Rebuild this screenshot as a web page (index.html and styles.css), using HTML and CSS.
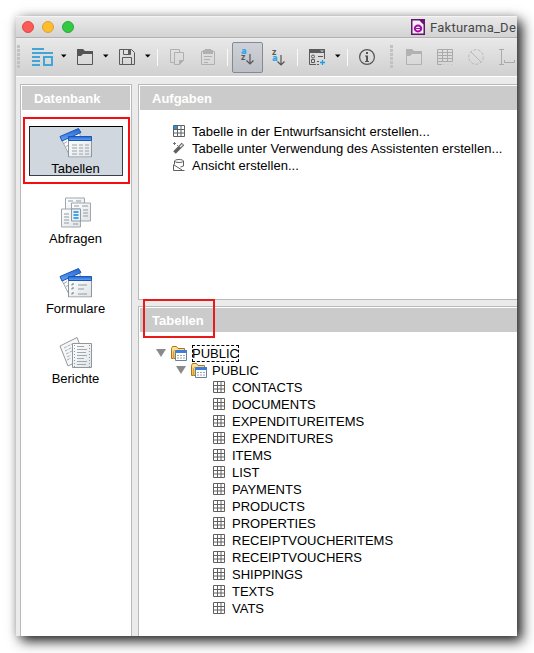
FILE: index.html
```
<!DOCTYPE html>
<html lang="de">
<head>
<meta charset="utf-8">
<title>Fakturama</title>
<link rel="stylesheet" href="styles.css">
</head>
<body>
<svg class="defs" width="0" height="0">
  <defs>
    <linearGradient id="gold" x2="0" y2="1"><stop stop-color="#ffe9a0"/><stop offset="1" stop-color="#eeb83c"/></linearGradient>
    <linearGradient id="blue" x2="0" y2="1"><stop stop-color="#2464d0"/><stop offset="1" stop-color="#65a5fa"/></linearGradient>
    <linearGradient id="paper" x2="1" y2="1"><stop stop-color="#fff"/><stop offset="1" stop-color="#dfe4e8"/></linearGradient>
  </defs>
  <symbol id="caret" viewBox="0 0 6 4"><path d="M0 .5h5.5L2.75 3.5z"/></symbol>
  <symbol id="folder" viewBox="0 0 16 17"><path d="M.5 2.500V15.500H15.500V4.500H7" fill="none" stroke="currentColor"/><path d="M0 0h6l2 2h8v3H6L4 7H0z" fill="currentColor"/></symbol>
  <symbol id="grid" viewBox="0 0 12 12"><path d="M.5.5h11v11H.5zM4.500 0v12M8 0v12M0 4.500h12M0 8h12" fill="none" stroke="#606060"/></symbol>
  <symbol id="dbfolder" viewBox="0 0 16 15">
    <path d="M.5 12.500V2.500l1-2h4l1.500 2h6.500v10z" fill="url(#gold)" stroke="#ad7411"/>
    <path d="M2.500 13V5.500l1-1h10" fill="none" stroke="#d79c38"/>
    <path d="M4.500 5.500h11v9h-11z" fill="#fff" stroke="#6a7f9b"/>
    <path d="M5 4h11v3H4V5z" fill="#3c7ede"/>
    <path d="M6 9.500h2m1 0h2m1 0h2M6 12h2m1 0h2m1 0h2" stroke="#9aa3ae"/>
  </symbol>
  <symbol id="window-pair" viewBox="0 0 34 30">
    <path d="M2 11 20 3l4 17-14 7z" fill="#f8fafb" stroke="#a2a8ad"/>
    <path d="M1 9 19.500 1l2.500 4L3 13.500z" fill="url(#blue)" stroke="#1957b5"/>
    <path d="M5 16l3-2m-1 5 2-1" stroke="#a2a8ad"/>
    <path d="M9.500 9.500h23v20h-23z" fill="url(#paper)" stroke="#8b959d"/>
    <path d="M9.500 9h23v4h-23z" fill="url(#blue)" stroke="#1957b5"/>
  </symbol>
</svg>

<main class="window">
  <header class="titlebar">
    <div class="lights"><i class="close"></i><i class="minimize"></i><i class="maximize"></i></div>
    <div class="title">
      <svg width="14" height="16" viewBox="0 0 14 16"><path d="M.75.75h8l4.500 4.500v10H.75z" fill="#f8edf8" stroke="#5f1768" stroke-width="1.500"/><path d="M8 0h6v6z" fill="#6c127a"/><ellipse cx="7" cy="9.500" rx="3.200" ry="3" fill="none" stroke="#a10ca5" stroke-width="2"/><path d="M5 9.500h5" stroke="#a10ca5"/></svg>
      <span>Fakturama_De</span>
    </div>
  </header>

  <nav class="toolbar">
    <i class="grip"></i>
    <svg width="21" height="18" viewBox="0 0 21 18"><path d="M0 1h12M0 5h21M0 9h8M0 13h8M0 17h8" stroke="#42a5d8" stroke-width="2"/><path d="M12 9h8v8h-8z" fill="none" stroke="#42a5d8" stroke-width="2"/></svg>
    <svg class="caret" width="6" height="4"><use href="#caret"/></svg>
    <svg class="dark" width="16" height="17"><use href="#folder"/></svg>
    <svg class="caret" width="6" height="4"><use href="#caret"/></svg>
    <svg width="16" height="17" viewBox="0 0 16 17" fill="none" stroke="#5b5b5b"><path d="M.5.500h12l3 3v12h-15zM4.500.500v5h7v-5M3.500 16V8.500h9V16"/><path d="M10 1v4" stroke-width="2"/></svg>
    <svg class="caret" width="6" height="4"><use href="#caret"/></svg>
    <i class="sep"></i>
    <svg width="15" height="17" viewBox="0 0 15 17" fill="none" stroke="#b0b0b0"><path d="M4 13.500H.5V.500h9V3M4.500 3.500h9v8l-4 4h-5z"/><path d="M9 16v-5h5z" fill="#b0b0b0" stroke="none"/></svg>
    <svg width="15" height="17" viewBox="0 0 15 17" fill="none" stroke="#b0b0b0"><path d="M1.500 2.500h13v13h-13zM4 7.500h8M4 10.500h6M4 13.500h4"/><path d="M3 1h2V0h6v1h2v4H3z" fill="#b0b0b0" stroke="none"/></svg>
    <i class="sep"></i>
    <div class="pressed"><div class="sort"><b>a</b><em>z</em><svg width="8" height="11" viewBox="0 0 8 11"><path d="M4 0v10M.5 6.500 4 10l3.500-3.500" fill="none" stroke="#555" stroke-width="1.200"/></svg></div></div>
    <div class="sort"><em>z</em><b>a</b><svg width="8" height="11" viewBox="0 0 8 11"><path d="M4 0v10M.5 6.500 4 10l3.500-3.500" fill="none" stroke="#555" stroke-width="1.200"/></svg></div>
    <i class="sep"></i>
    <svg width="17" height="17" viewBox="0 0 17 17" fill="none" stroke="#5b5b5b"><path d="M.5 3v12.500H7M15.500 3v7M9 7.500h5M8 12.500h2M8 15.500h2"/><path d="M0 0h16v4H0z" fill="#5b5b5b" stroke="none"/><path d="M11 1.500h4L13 3z" fill="#ddd" stroke="none"/><circle cx="4" cy="7.500" r="1.500"/><path d="M2.500 10.500h3v3h-3z"/><path d="M13.500 11v5M11 13.500h5" stroke="#1d9bea" stroke-width="1.300"/></svg>
    <svg class="caret" width="6" height="4"><use href="#caret"/></svg>
    <i class="sep"></i>
    <svg width="16" height="17" viewBox="0 0 16 17"><circle cx="8" cy="8" r="7.400" fill="none" stroke="#555" stroke-width="1.200"/><path d="M7 3h2v2H7zM6 6.500h3V12h1v1H6v-1h1V7.500H6z" fill="#555"/></svg>
    <i class="grip"></i>
    <svg class="pale" width="16" height="17"><use href="#folder"/></svg>
    <svg width="16" height="17" viewBox="0 0 16 17" fill="none" stroke="#aaa"><path d="M.5.500h15v12H.5zM0 3.500h16M0 6.500h16M0 9.500h16M5.500 1v12M10.500 1v12M.5 12v3.500H5"/><path d="M6 15.500h10" stroke-dasharray="2 2" stroke="#ccc"/></svg>
    <svg width="16" height="17" viewBox="0 0 16 17" fill="none" stroke="#b9b9b9"><circle cx="8" cy="8" r="7.300" stroke-dasharray="3 1.500"/><path d="m3 3 10 10"/></svg>
    <svg width="18" height="17" viewBox="0 0 18 17" fill="none" stroke="#aaa"><path d="M0 .5h5M2.500.500v15M0 15.500h5M5.500 11v2.500h10V11"/></svg>
  </nav>

  <div class="workspace">
    <aside class="panel database">
      <h2>Datenbank</h2>
      <div class="categories">
        <div class="category selected">
          <svg width="34" height="30" viewBox="0 0 34 30"><use href="#window-pair"/><path d="M13 17.500h5m2 0h4m2 0h4M13 20.500h5m2 0h4m2 0h4M13 23.500h5m2 0h4m2 0h4M13 26.500h5m2 0h4m2 0h4" stroke="#9aa1a7"/></svg>
          <span>Tabellen</span>
        </div>
        <div class="category">
          <svg width="34" height="30" viewBox="0 0 34 30"><path d="M6.500.500h19v17h-19z" fill="url(#paper)" stroke="#a0a6ab"/><path d="M9 3.500h5m3 0h5" stroke="#929ba2"/><path d="M12.500 5.500h19v18h-19z" fill="url(#paper)" stroke="#a0a6ab"/><path d="M15 8.500h5m3 0h6M24 12.500h5M24 15.500h5M24 18.500h5" stroke="#929ba2"/><path d="M2.500 11.500h19v18h-19z" fill="url(#paper)" stroke="#a0a6ab"/><path d="M12.500 11.500h9v12h-9z" fill="#e6f2fa" stroke="#929ba2"/><path d="M5 16.500h5M5 19.500h5M5 22.500h5M5 25.500h5M14 26.500h5" stroke="#929ba2"/><path d="M14.500 14.500h5m-5 3h5m-5 3h5" stroke="#1689d5" stroke-width="1.500"/></svg>
          <span>Abfragen</span>
        </div>
        <div class="category">
          <svg width="34" height="30" viewBox="0 0 34 30"><use href="#window-pair"/><path d="M19 17.500h9m-9 4h6m-6 5h9" stroke="#929ba2"/><path d="M13 18v-1.500h2m-2 5.500v-1.500h2m-2 6.500v-1.500h2" fill="none" stroke="#6f777e"/></svg>
          <span>Formulare</span>
        </div>
        <div class="category">
          <svg width="34" height="31" viewBox="0 0 34 31"><path d="M1 9 18 .5l8 20L9 29z" fill="#f5f7f8" stroke="#92999f"/><path d="m5 11 8-4m-7 7 8-4m-7 7 6-3m-5 6 4-2M8 23l4-2" stroke="#a7adb2" stroke-dasharray="3 1"/><path d="M13.500 6.500h19v24h-19z" fill="url(#paper)" stroke="#8f979d"/><path d="M15.500 8v22M30.500 8v22" stroke="#8f979d" stroke-dasharray="1 2"/><path d="M18 9.500h7m-7 3h10m-10 3h9m-9 3h10m-10 3h7m-7 3h10m-10 3h9" stroke="#a1a7ac"/></svg>
          <span>Berichte</span>
        </div>
      </div>
      <div class="marker marker-category"></div>
    </aside>

    <div class="content">
      <section class="panel tasks">
        <h2>Aufgaben</h2>
        <ul>
          <li><svg width="12" height="12"><use href="#grid"/><path d="M1 1h3v3H1z" fill="#1c99e0"/></svg>Tabelle in der Entwurfsansicht erstellen...</li>
          <li><svg width="12" height="12" viewBox="0 0 12 12"><path d="M1.500 10.500 10 2" stroke="#606060" stroke-width="3.500"/><path d="m7 5 2.500-2.500" stroke="#eee" stroke-width="1.400"/><path d="M1.500 0v3M0 1.500h3M4 3.500h1" stroke="#777"/></svg>Tabelle unter Verwendung des Assistenten erstellen...</li>
          <li><svg width="12" height="12" viewBox="0 0 12 12" fill="none" stroke="#606060"><ellipse cx="6" cy="2" rx="4.500" ry="1.500"/><path d="M1.500 2v3l-1 1v5.500h11M10.500 2v5L7.500 8M1 6l8 5"/></svg>Ansicht erstellen...</li>
        </ul>
      </section>
      <section class="panel tables">
        <h2>Tabellen</h2>
        <div class="tree">
          <div class="node root"><i class="open"></i><svg width="16" height="15"><use href="#dbfolder"/></svg><span class="focused">PUBLIC</span></div>
          <div class="node schema"><i class="open"></i><svg width="16" height="15"><use href="#dbfolder"/></svg><span>PUBLIC</span></div>
          <div class="node leaf"><svg width="12" height="12"><use href="#grid"/></svg><span>CONTACTS</span></div>
          <div class="node leaf"><svg width="12" height="12"><use href="#grid"/></svg><span>DOCUMENTS</span></div>
          <div class="node leaf"><svg width="12" height="12"><use href="#grid"/></svg><span>EXPENDITUREITEMS</span></div>
          <div class="node leaf"><svg width="12" height="12"><use href="#grid"/></svg><span>EXPENDITURES</span></div>
          <div class="node leaf"><svg width="12" height="12"><use href="#grid"/></svg><span>ITEMS</span></div>
          <div class="node leaf"><svg width="12" height="12"><use href="#grid"/></svg><span>LIST</span></div>
          <div class="node leaf"><svg width="12" height="12"><use href="#grid"/></svg><span>PAYMENTS</span></div>
          <div class="node leaf"><svg width="12" height="12"><use href="#grid"/></svg><span>PRODUCTS</span></div>
          <div class="node leaf"><svg width="12" height="12"><use href="#grid"/></svg><span>PROPERTIES</span></div>
          <div class="node leaf"><svg width="12" height="12"><use href="#grid"/></svg><span>RECEIPTVOUCHERITEMS</span></div>
          <div class="node leaf"><svg width="12" height="12"><use href="#grid"/></svg><span>RECEIPTVOUCHERS</span></div>
          <div class="node leaf"><svg width="12" height="12"><use href="#grid"/></svg><span>SHIPPINGS</span></div>
          <div class="node leaf"><svg width="12" height="12"><use href="#grid"/></svg><span>TEXTS</span></div>
          <div class="node leaf"><svg width="12" height="12"><use href="#grid"/></svg><span>VATS</span></div>
        </div>
        <div class="marker marker-tables"></div>
      </section>
    </div>
  </div>
</main>
</body>
</html>
```
FILE: styles.css
```
* { box-sizing: border-box; }
body {
  margin: 0;
  height: 653px;
  padding: 16px;
  overflow: hidden;
  background: #fff;
  color: #000;
  font: 13px/17px "Liberation Sans", Arial, sans-serif;
}
svg { display: block; flex: none; }
.defs { position: absolute; }

.window {
  display: flex;
  flex-direction: column;
  width: 501px;
  height: 620px;
  background: #ebebeb;
  box-shadow: 5px 5px 12px rgba(0, 0, 0, .88), 0 0 9px rgba(0, 0, 0, .12);
}

.titlebar {
  display: flex;
  flex: none;
  height: 22px;
  overflow: hidden;
  border-top: 1px solid #f5f5f5;
  border-bottom: 1px solid #b1b1b1;
  background: linear-gradient(#e9e9e9, #d3d3d3);
}
.lights { display: flex; gap: 8px; width: 395px; flex: none; padding: 4px 0 0 6px; }
.lights i { width: 12px; height: 12px; border: 1px solid; border-radius: 50%; }
.close { background: #fc5b57; border-color: #df4744 !important; }
.minimize { background: #fdbd2e; border-color: #dea034 !important; }
.maximize { background: #34c943; border-color: #27aa35 !important; }
.title {
  display: flex;
  flex: none;
  gap: 5px;
  padding-top: 2px;
  color: #474747;
  font: 13px/17px Roboto, sans-serif;
  letter-spacing: .25px;
  white-space: nowrap;
}

.toolbar {
  display: grid;
  grid-template-columns: 15px 29px 16px 26px 16px 26px 12px 13px 30px 27px 5px 40px 25px 12px 26px 12px 12px 31px 16px 31px 31px 31px 18px;
  align-items: center;
  flex: none;
  height: 39px;
  padding-left: 1px;
  overflow: hidden;
  border-top: 1px solid #ededed;
  border-bottom: 1px solid #fff;
  background: linear-gradient(#e8e8e8, #d0d0d0);
}
.toolbar > svg { margin-bottom: 1px; }
.toolbar > .caret { margin-bottom: 3px; }
.dark { color: #555; }
.pale { color: #b2b2b2; }
.grip { width: 3px; height: 23px; margin-bottom: 2px; background: repeating-linear-gradient(#c2c2c2 0 3px, transparent 3px 4px); }
.sep { width: 1px; height: 17px; background: #fafafa; }
.pressed {
  width: 31px;
  height: 31px;
  margin-bottom: 1px;
  padding: 5px 0 0 8px;
  border: 1px solid #858995;
  border-radius: 2px;
  background: linear-gradient(#ced2d8, #bdc1c7);
}
.sort {
  display: grid;
  grid-template-columns: 5px 8px;
  grid-template-rows: 6px 11px;
  width: 13px;
  height: 17px;
  font: bold 9px/6px "Open Sans", sans-serif;
}
.toolbar > .sort { margin-bottom: 1px; }
.sort b { color: #2ca6ea; grid-column: 1; grid-row: 1; }
.sort em { color: #5a5a5a; font-style: normal; grid-column: 1; grid-row: 2; }
.toolbar > .sort b { grid-row: 2; }
.toolbar > .sort em { grid-row: 1; }
.sort svg { grid-column: 2; grid-row: 2; }

.workspace { display: flex; flex: 1; gap: 6px; min-height: 0; padding: 7px 0 0 4px; }
.panel { position: relative; border: 1px solid #b9b9b9; background: #fff; }
.panel h2 {
  height: 24px;
  margin: 1px;
  padding: 4px 0 0 12px;
  background: #cbcbcb;
  color: #fff;
  font-size: 13px;
  line-height: 17px;
}
.database { width: 112px; flex: none; border-bottom: 0; }
.categories { display: flex; flex-direction: column; align-items: center; gap: 20px; padding: 15px 1px 0 0; }
.category {
  display: flex;
  flex-direction: column;
  align-items: center;
  width: 94px;
  height: 50px;
  border: 1px solid transparent;
}
.category svg { height: 31px; }
.category span { margin-top: 2px; }
.selected { border-color: #000 #34404e #34404e #222; background: #d1d7df; }

.content { display: flex; flex: 1; flex-direction: column; gap: 6px; min-width: 0; }
.content .panel { border-right: 0; }
.content h2 { margin-right: 0; }
.tasks { flex: none; height: 216px; }
.tasks ul { margin: 0; padding: 12px 0 0 34px; list-style: none; }
.tasks li { display: flex; align-items: center; gap: 7px; height: 17px; letter-spacing: .035px; white-space: nowrap; }
.tasks li svg { margin-bottom: 1px; }
.tables { flex: 1; border-bottom: 0 !important; }

.tree { padding-top: 12px; }
.node { display: flex; align-items: center; height: 17px; }
.node svg { margin-right: 5px; }
.root { padding-left: 17px; }
.schema { padding-left: 37px; }
.leaf { padding-left: 74px; }
.leaf svg { margin: 0 7px 1px 0; }
.open { margin: 0 5px 1px 0; border: solid transparent; border-width: 8px 5px 0; border-top-color: #8a8a8a; }
.focused { outline: 1px dashed #000; outline-offset: -1px; }

.marker { position: absolute; z-index: 2; border: 2px solid #f50d10; }
.marker-category { left: 2px; top: 32px; width: 107px; height: 67px; }
.marker-tables { left: 4px; top: -8px; width: 72px; height: 39px; border-color: #e81a1a; }
```
